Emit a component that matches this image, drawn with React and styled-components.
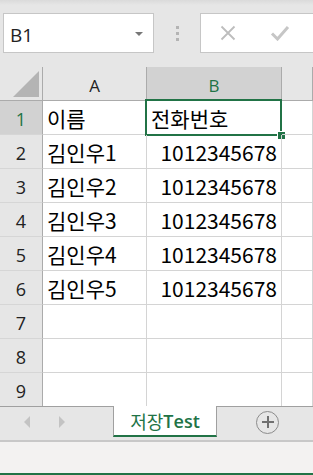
import React from "react";
import styled, { createGlobalStyle } from "styled-components";

const GREEN = "#217346";

const Global = createGlobalStyle`
  html, body {
    margin: 0;
    padding: 0;
    background: #e6e6e6;
    overflow: hidden;
  }
  body {
    font-family: "Noto Sans", "Noto Sans CJK KR", sans-serif;
  }
`

const Window = styled.div`
  width: 313px;
  height: 475px;
  display: flex;
  flex-direction: column;
  overflow: hidden;
`

const Toolbar = styled.div`
  height: 67px;
  flex: none;
  display: flex;
  align-items: flex-start;
  padding: 13px 0 0 3px;
  box-sizing: border-box;
  background: linear-gradient(#dadada 0, #e6e6e6 5px);
`

const NameBox = styled.div`
  width: 151px;
  height: 40px;
  box-sizing: border-box;
  background: #fff;
  border: 1px solid #c6c6c6;
  display: flex;
  align-items: center;
  justify-content: space-between;
  padding: 3px 10px 0 6px;
  font-family: "Open Sans", "Noto Sans", sans-serif;
  font-size: 19px;
  color: #222;
`

const DropArrow = styled.span`
  width: 0;
  height: 0;
  border-left: 4px solid transparent;
  border-right: 4px solid transparent;
  border-top: 4px solid #777;
  margin-top: -2px;
`

const Grip = styled.div`
  width: 46px;
  height: 40px;
  display: flex;
  flex-direction: column;
  align-items: center;
  justify-content: center;
  gap: 3px;

  span {
    width: 3px;
    height: 3px;
    background: #b4b4b4;
  }
`

const FormulaBox = styled.div`
  flex: 1;
  height: 40px;
  box-sizing: border-box;
  background: #fff;
  border: 1px solid #c6c6c6;
  border-right: none;
  display: flex;
  align-items: center;
  padding-left: 19px;
  gap: 34px;
`

const Sheet = styled.div`
  height: 339px;
  flex: none;
  overflow: hidden;
  position: relative;
  background: #fff;
  display: grid;
  grid-template-columns: 43px 104px 135px 1fr;
  grid-auto-rows: 34px;
`

const Corner = styled.div`
  background: #e6e6e6;
  border-right: 1px solid #ababab;
  border-bottom: 1px solid #ababab;
  position: relative;

  &::after {
    content: "";
    position: absolute;
    right: 3px;
    bottom: 3px;
    width: 26px;
    height: 26px;
    background: #b4b4b4;
    clip-path: polygon(100% 0, 100% 100%, 0 100%);
  }
`

const ColHead = styled.div`
  background: ${p => (p.active ? "#d2d2d2" : "#e6e6e6")};
  color: ${p => (p.active ? GREEN : "#222")};
  border-right: 1px solid #ababab;
  border-bottom: 1px solid #ababab;
  display: flex;
  align-items: center;
  justify-content: center;
  font-family: "Open Sans", "Noto Sans", sans-serif;
  font-size: 17px;
  padding-top: 3px;
  box-sizing: border-box;
`

const RowHead = styled.div`
  background: ${p => (p.active ? "#d2d2d2" : "#e6e6e6")};
  color: ${p => (p.active ? GREEN : "#222")};
  border-right: 1px solid #ababab;
  border-bottom: 1px solid #d6d6d6;
  display: flex;
  align-items: center;
  justify-content: center;
  font-family: "Open Sans", "Noto Sans", sans-serif;
  font-size: 18px;
  padding-top: 3px;
  box-sizing: border-box;
`

const Cell = styled.div`
  border-right: 1px solid #d4d4d4;
  border-bottom: 1px solid #d4d4d4;
  display: flex;
  align-items: flex-end;
  justify-content: ${p => (p.num ? "flex-end" : "flex-start")};
  padding: 0 4px 1px 4px;
  font-family: "Noto Sans CJK KR", "Noto Sans", sans-serif;
  font-size: 21px;
  line-height: 30px;
  color: #000;
  box-sizing: border-box;
  position: relative;
  white-space: nowrap;
  overflow: visible;
`

const Selection = styled.div`
  position: absolute;
  left: -2px;
  top: -2px;
  right: -1px;
  bottom: -2px;
  border: 2px solid ${GREEN};
  pointer-events: none;

  &::after {
    content: "";
    position: absolute;
    right: -5px;
    bottom: -5px;
    width: 7px;
    height: 7px;
    background: ${GREEN};
    border: 1px solid #fff;
    border-right: none;
    border-bottom: none;
  }
`

const TabBar = styled.div`
  height: 34px;
  flex: none;
  display: flex;
  background: #e6e6e6;
`

const TabNav = styled.div`
  width: 113px;
  border-top: 1px solid #a0a0a0;
  display: flex;
  align-items: center;
  padding-left: 24px;
  gap: 29px;
  box-sizing: border-box;
  padding-bottom: 3px;
`

const NavArrow = styled.span`
  width: 0;
  height: 0;
  border-top: 6px solid transparent;
  border-bottom: 6px solid transparent;
  ${p =>
    p.dir === "left"
      ? "border-right: 6px solid #c3c3c3;"
      : "border-left: 6px solid #c3c3c3;"}
`

const Tab = styled.div`
  width: 104px;
  height: 31px;
  box-sizing: border-box;
  background: #fff;
  border-left: 1px solid #a0a0a0;
  border-right: 1px solid #a0a0a0;
  border-bottom: 2px solid ${GREEN};
  color: ${GREEN};
  display: flex;
  align-items: center;
  justify-content: center;
  font-family: "Noto Sans CJK KR", sans-serif;
  font-size: 18px;
  padding-top: 1px;

  b {
    font-family: "Open Sans", "Noto Sans", sans-serif;
    font-weight: 600;
  }
`

const TabRest = styled.div`
  flex: 1;
  border-top: 1px solid #a0a0a0;
  display: flex;
  align-items: center;
  padding-left: 39px;
  padding-bottom: 3px;
`

const AddSheet = styled.div`
  width: 21px;
  height: 21px;
  border-radius: 50%;
  border: 1px solid #8c8c8c;
  position: relative;

  &::before,
  &::after {
    content: "";
    position: absolute;
    background: #707070;
    left: 50%;
    top: 50%;
    transform: translate(-50%, -50%);
  }
  &::before {
    width: 12px;
    height: 2px;
  }
  &::after {
    width: 2px;
    height: 12px;
  }
`

const StatusBar = styled.div`
  flex: 1;
  background: #f3f2f1;
  border-top: 2px solid #c8c8c8;
  border-bottom: 2px solid ${GREEN};
`

const rows = [
  ["이름", "전화번호"],
  ["김인우1", "1012345678"],
  ["김인우2", "1012345678"],
  ["김인우3", "1012345678"],
  ["김인우4", "1012345678"],
  ["김인우5", "1012345678"],
  ["", ""],
  ["", ""],
  ["", ""],
];

function CancelIcon() {
  return (
    <svg width="16" height="16" viewBox="0 0 16 16">
      <path d="M1.5 1.5 L14.5 14.5 M14.5 1.5 L1.5 14.5" stroke="#bdbdbd" strokeWidth="1.8" fill="none" />
    </svg>
  );
}

function EnterIcon() {
  return (
    <svg width="20" height="16" viewBox="0 0 20 16">
      <path d="M2 8.5 L7.5 14 L18 2" stroke="#c6c6c6" strokeWidth="3" fill="none" />
    </svg>
  );
}

export default function App() {
  return (
    <Window>
      <Global />
      <Toolbar>
        <NameBox>
          B1
          <DropArrow />
        </NameBox>
        <Grip>
          <span />
          <span />
          <span />
        </Grip>
        <FormulaBox>
          <CancelIcon />
          <EnterIcon />
        </FormulaBox>
      </Toolbar>
      <Sheet>
        <Corner />
        <ColHead>A</ColHead>
        <ColHead active>B</ColHead>
        <ColHead />
        {rows.map(([name, phone], i) => (
          <React.Fragment key={i}>
            <RowHead active={i === 0}>{i + 1}</RowHead>
            <Cell>{name}</Cell>
            <Cell num={i > 0}>
              {phone}
              {i === 0 && <Selection />}
            </Cell>
            <Cell />
          </React.Fragment>
        ))}
      </Sheet>
      <TabBar>
        <TabNav>
          <NavArrow dir="left" />
          <NavArrow dir="right" />
        </TabNav>
        <Tab>
          저장<b>Test</b>
        </Tab>
        <TabRest>
          <AddSheet />
        </TabRest>
      </TabBar>
      <StatusBar />
    </Window>
  );
}
